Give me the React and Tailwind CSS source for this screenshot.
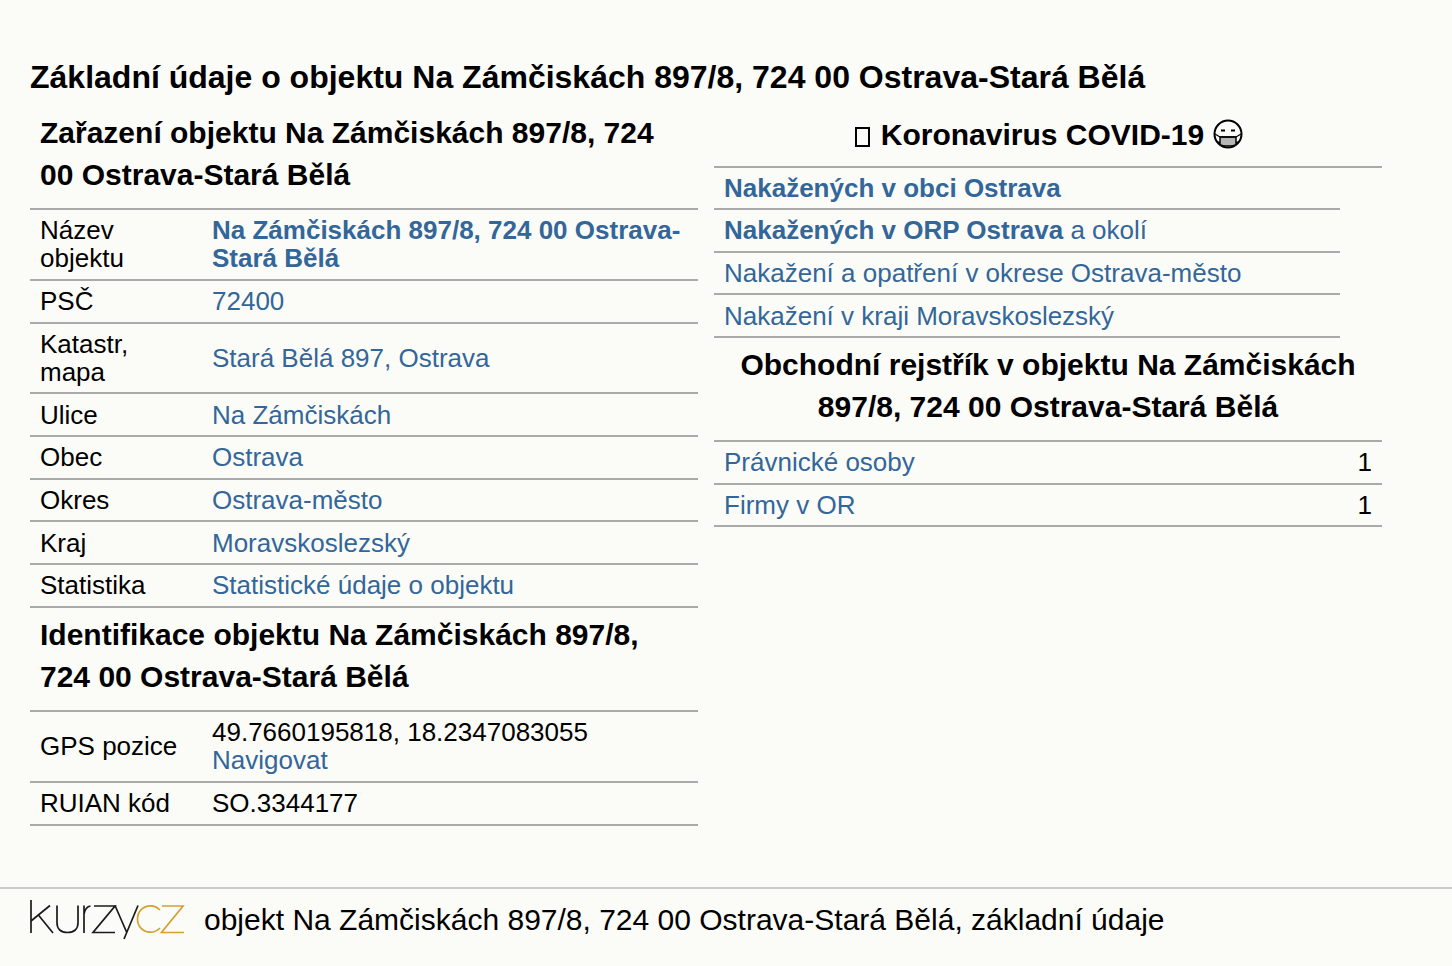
const L = ({ children, b }) => (
  <a className={`text-[#336699] ${b ? "font-bold" : ""}`}>{children}</a>
);

const Row = ({ label, children, pad = "py-[6.33px]" }) => (
  <div className={`flex items-center border-b-2 border-[#aaaaaa] ${pad} pl-[10px]`}>
    <div className="w-[172px] shrink-0 pr-[20px]">{label}</div>
    <div className="flex-1 pr-2">{children}</div>
  </div>
);

const RRow = ({ children, right, pad = "py-[6.33px]" }) => (
  <div className={`flex items-center justify-between border-b-2 border-[#aaaaaa] ${pad} px-[10px]`}>
    <div>{children}</div>
    {right && <div>{right}</div>}
  </div>
);

const H = ({ children, center }) => (
  <h2 className={`text-[30px] leading-[42px] font-bold text-black px-[10px] ${center ? "text-center" : ""}`}>
    {children}
  </h2>
);

function Logo() {
  return (
    <svg width="156" height="42" viewBox="0 0 156 42" fill="none" strokeWidth="1.7" className="shrink-0">
      <g stroke="#1a1a1a">
        <path d="M1 1V34M1 22L20 6.5M8 15.5L23 34" />
        <path d="M27 6.5V24C27 30 31 33.5 37.5 33.5C44 33.5 48 30 48 24V6.5" />
        <path d="M54 34V6.5M54 15C55 10 57 7.500 60.500 7" />
        <path d="M64 7H85L63 33.5H85" />
        <path d="M85 6.5L97 34M108 6.5L94 40" />
      </g>
      <g stroke="#d4a030">
        <path d="M130 11C127.500 8.500 124.500 6.800 120.500 6.800C113 6.800 107.500 12.500 107.500 20C107.500 27.500 113 33.200 120.500 33.200C124.500 33.200 127.500 31.500 130 29" />
        <path d="M132 7H153L131.500 33.500H154" />
      </g>
    </svg>
  );
}

function MaskFace() {
  return (
    <svg width="30" height="30" viewBox="0 0 30 30" fill="none" stroke="#000" className="inline-block align-[-4px]">
      <circle cx="15" cy="15" r="13.5" strokeWidth="2" />
      <path d="M8 11.500H12M18 11.500H22" strokeWidth="2" />
      <path d="M7 18H23V25.500C20 27.500 10 27.500 7 25.500Z" fill="#b5b5b5" strokeWidth="1.5" />
      <path d="M7 18H23" strokeWidth="1.5" />
      <path d="M7 18L2 15M23 18L28 15M7 24L3.500 22M23 24L26.500 22" strokeWidth="1.2" />
    </svg>
  );
}

export default function App() {
  return (
    <div className="min-h-[966px] bg-[#fbfcf8] text-black text-[26px] leading-[28px] font-['Liberation_Sans',Arial,sans-serif] pt-[56px]">
      <div className="px-[30px]">
        <h1 className="text-[32px] leading-[42px] font-bold">
          Základní údaje o objektu Na Zámčiskách 897/8, 724 00 Ostrava-Stará Bělá
        </h1>
        <div className="flex gap-[16px] mt-[14px]">
          <div className="w-[668px]">
            <div className="border-b-2 border-[#aaaaaa] pb-[12px]">
              <H>Zařazení objektu Na Zámčiskách 897/8, 724 00 Ostrava-Stará Bělá</H>
            </div>
            <Row label="Název objektu" pad="pt-[6.33px] pb-[6.63px]"><L b>Na Zámčiskách 897/8, 724 00 Ostrava-Stará Bělá</L></Row>
            <Row label="PSČ"><L>72400</L></Row>
            <Row label="Katastr, mapa"><L>Stará Bělá 897, Ostrava</L></Row>
            <Row label="Ulice"><L>Na Zámčiskách</L></Row>
            <Row label="Obec"><L>Ostrava</L></Row>
            <Row label="Okres"><L>Ostrava-město</L></Row>
            <Row label="Kraj"><L>Moravskoslezský</L></Row>
            <Row label="Statistika"><L>Statistické údaje o objektu</L></Row>
            <div className="border-b-2 border-[#aaaaaa] pt-[6px] pb-[12px]">
              <H>Identifikace objektu Na Zámčiskách 897/8, 724 00 Ostrava-Stará Bělá</H>
            </div>
            <Row label="GPS pozice" pad="pt-[6.33px] pb-[6.93px]">
              49.7660195818, 18.2347083055
              <br />
              <L>Navigovat</L>
            </Row>
            <Row label="RUIAN kód" pad="pt-[6.33px] pb-[6.63px]">SO.3344177</Row>
          </div>
          <div className="w-[668px]">
            <div className="border-b-2 border-[#aaaaaa] pt-[2px] h-[55.6px]">
              <H center>
                <span className="inline-block w-[15px] h-[20px] ml-[2px] mr-[2px] border-2 border-black align-[-2px]"></span>{" "}
                Koronavirus COVID-19 <MaskFace />
              </H>
            </div>
            <div className="w-[626px]">
              <RRow pad="pt-[6.13px] pb-[6.33px]"><L b>Nakažených v obci Ostrava</L></RRow>
              <RRow><L b>Nakažených v ORP Ostrava</L> <L>a okolí</L></RRow>
              <RRow><L>Nakažení a opatření v okrese Ostrava-město</L></RRow>
              <RRow><L>Nakažení v kraji Moravskoslezský</L></RRow>
            </div>
            <div className="border-b-2 border-[#aaaaaa] pt-[6px] pb-[12px]">
              <H center>Obchodní rejstřík v objektu Na Zámčiskách 897/8, 724 00 Ostrava-Stará Bělá</H>
            </div>
            <RRow right="1"><L>Právnické osoby</L></RRow>
            <RRow right="1"><L>Firmy v OR</L></RRow>
          </div>
        </div>
      </div>
      <div className="mt-[61.1px] border-t-2 border-[#cccccc] h-[78px] flex items-start pl-[30px] pt-[10px]">
        <Logo />
        <div className="ml-[18px] pt-[5px] text-[30px] leading-[32px]">
          objekt Na Zámčiskách 897/8, 724 00 Ostrava-Stará Bělá, základní údaje
        </div>
      </div>
    </div>
  );
}
